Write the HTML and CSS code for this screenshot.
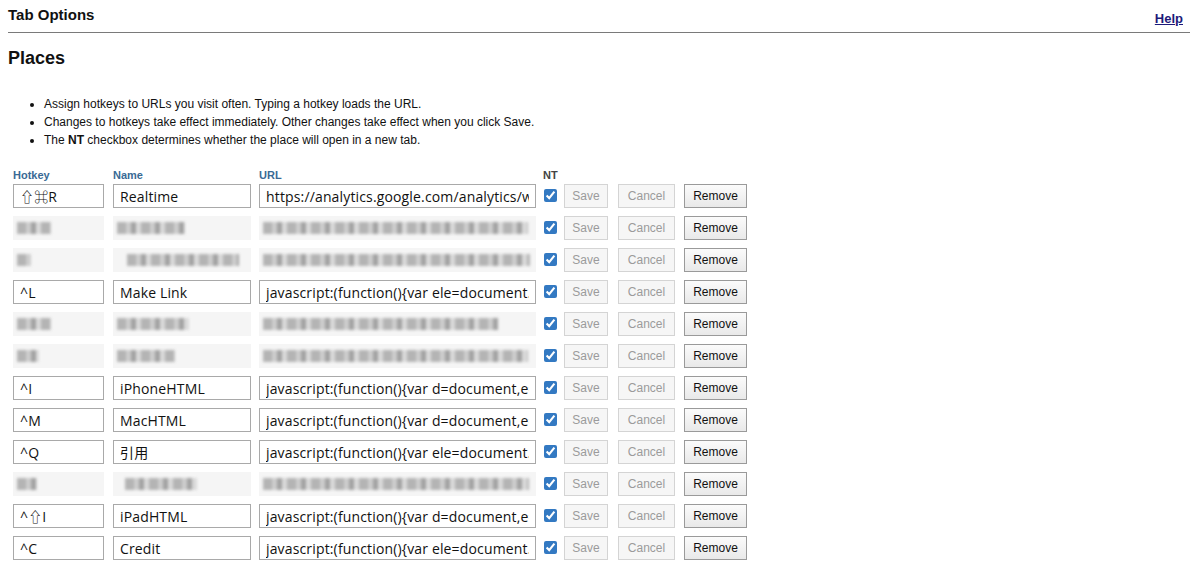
FILE: index.html
```html
<!DOCTYPE html>
<html lang="en">
<head>
  <meta charset="UTF-8" />
  <title>Tab Options</title>
  <link rel="stylesheet" href="styles.css">
</head>
<body>
  <div class="topbar">
    <h1>Tab Options</h1>
    <a href="#" class="help">Help</a>
  </div>

  <h2>Places</h2>

  <ul class="notes">
    <li>Assign hotkeys to URLs you visit often. Typing a hotkey loads the URL.</li>
    <li>Changes to hotkeys take effect immediately. Other changes take effect when you click Save.</li>
    <li>The <b>NT</b> checkbox determines whether the place will open in a new tab.</li>
  </ul>

  <div class="places">
    <div class="row head">
      <span class="c-key">Hotkey</span>
      <span class="c-name">Name</span>
      <span class="c-url">URL</span>
      <span class="c-nt">NT</span>
    </div>

    <div class="row">
      <input class="c-key" value="⇧⌘R" />
      <input class="c-name" value="Realtime" />
      <input class="c-url" value="https://analytics.google.com/analytics/web/#realtime" />
      <input type="checkbox" class="c-nt" checked />
      <button class="btn off">Save</button><button class="btn off cancel">Cancel</button><button class="btn remove">Remove</button>
    </div>

    <!-- hidden rows are shown pixelated -->
    <div class="row">
      <div class="c-key fuzz"><i style="width:34px"></i></div>
      <div class="c-name fuzz"><i style="width:68px"></i></div>
      <div class="c-url fuzz"><i style="width:265px"></i></div>
      <input type="checkbox" class="c-nt" checked />
      <button class="btn off">Save</button><button class="btn off cancel">Cancel</button><button class="btn remove">Remove</button>
    </div>

    <div class="row">
      <div class="c-key fuzz"><i style="width:14px"></i></div>
      <div class="c-name fuzz"><i style="width:112px;margin-left:10px"></i></div>
      <div class="c-url fuzz"><i style="width:267px"></i></div>
      <input type="checkbox" class="c-nt" checked />
      <button class="btn off">Save</button><button class="btn off cancel">Cancel</button><button class="btn remove">Remove</button>
    </div>

    <div class="row">
      <input class="c-key" value="^L" />
      <input class="c-name" value="Make Link" />
      <input class="c-url" value="javascript:(function(){var ele=document.createElement('a');})()" />
      <input type="checkbox" class="c-nt" checked />
      <button class="btn off">Save</button><button class="btn off cancel">Cancel</button><button class="btn remove">Remove</button>
    </div>

    <div class="row">
      <div class="c-key fuzz"><i style="width:34px"></i></div>
      <div class="c-name fuzz"><i style="width:72px"></i></div>
      <div class="c-url fuzz"><i style="width:235px"></i></div>
      <input type="checkbox" class="c-nt" checked />
      <button class="btn off">Save</button><button class="btn off cancel">Cancel</button><button class="btn remove">Remove</button>
    </div>

    <div class="row">
      <div class="c-key fuzz"><i style="width:22px"></i></div>
      <div class="c-name fuzz"><i style="width:58px"></i></div>
      <div class="c-url fuzz"><i style="width:265px"></i></div>
      <input type="checkbox" class="c-nt" checked />
      <button class="btn off">Save</button><button class="btn off cancel">Cancel</button><button class="btn remove">Remove</button>
    </div>

    <div class="row">
      <input class="c-key" value="^I" />
      <input class="c-name" value="iPhoneHTML" />
      <input class="c-url" value="javascript:(function(){var d=document,e=d.createElement('textarea');})()" />
      <input type="checkbox" class="c-nt" checked />
      <button class="btn off">Save</button><button class="btn off cancel">Cancel</button><button class="btn remove">Remove</button>
    </div>

    <div class="row">
      <input class="c-key" value="^M" />
      <input class="c-name" value="MacHTML" />
      <input class="c-url" value="javascript:(function(){var d=document,e=d.createElement('textarea');})()" />
      <input type="checkbox" class="c-nt" checked />
      <button class="btn off">Save</button><button class="btn off cancel">Cancel</button><button class="btn remove">Remove</button>
    </div>

    <div class="row">
      <input class="c-key" value="^Q" />
      <input class="c-name" value="引用" />
      <input class="c-url" value="javascript:(function(){var ele=document.getSelection();})()" />
      <input type="checkbox" class="c-nt" checked />
      <button class="btn off">Save</button><button class="btn off cancel">Cancel</button><button class="btn remove">Remove</button>
    </div>

    <div class="row">
      <div class="c-key fuzz"><i style="width:20px"></i></div>
      <div class="c-name fuzz"><i style="width:72px;margin-left:8px"></i></div>
      <div class="c-url fuzz"><i style="width:266px"></i></div>
      <input type="checkbox" class="c-nt" checked />
      <button class="btn off">Save</button><button class="btn off cancel">Cancel</button><button class="btn remove">Remove</button>
    </div>

    <div class="row">
      <input class="c-key" value="^⇧I" />
      <input class="c-name" value="iPadHTML" />
      <input class="c-url" value="javascript:(function(){var d=document,e=d.createElement('textarea');})()" />
      <input type="checkbox" class="c-nt" checked />
      <button class="btn off">Save</button><button class="btn off cancel">Cancel</button><button class="btn remove">Remove</button>
    </div>

    <div class="row">
      <input class="c-key" value="^C" />
      <input class="c-name" value="Credit" />
      <input class="c-url" value="javascript:(function(){var ele=document.title;})()" />
      <input type="checkbox" class="c-nt" checked />
      <button class="btn off">Save</button><button class="btn off cancel">Cancel</button><button class="btn remove">Remove</button>
    </div>
  </div>
</body>
</html>
```

FILE: styles.css
```css
body {
  font-family: "Liberation Sans", Arial, sans-serif;
  margin: 0;
  padding: 0 10px 0 8px;
  color: #111;
  background: #fff;
}

.topbar {
  display: flex;
  justify-content: space-between;
  align-items: flex-end;
  border-bottom: 1px solid #7a7a7a;
  height: 32px;
}

h1 {
  font-size: 15px;
  margin: 0;
  padding-top: 6px;
  align-self: flex-start;
}

.help {
  font-size: 13px;
  font-weight: bold;
  color: #1d1a7a;
  margin-right: 7px;
  margin-bottom: 6px;
}

h2 {
  font-size: 18px;
  margin: 14px 0 0 0;
  line-height: 22px;
}

.notes {
  margin: 26px 0 0 0;
  padding-left: 36px;
  font-size: 12px;
  line-height: 18px;
}

.places {
  margin: 19px 0 0 5px;
  display: flex;
  flex-direction: column;
  gap: 8px;
}

.row {
  display: flex;
  align-items: center;
  height: 24px;
}

.row.head {
  height: 14px;
  margin-bottom: -6px;
  font-size: 11px;
  font-weight: bold;
  color: #3a6a95;
}

.row.head .c-nt {
  color: #444;
}

.c-key {
  width: 91px;
  margin-right: 9px;
}

.c-name {
  width: 138px;
  margin-right: 8px;
}

.c-url {
  width: 277px;
  margin-right: 8px;
}

.c-nt {
  width: 13px;
  margin: 0 7px 0 0;
}

.row.head .c-url {
  margin-right: 7px;
}

.row.head .c-nt {
  width: auto;
}

input {
  box-sizing: border-box;
  height: 24px;
  border: 1px solid #a9a9a9;
  border-radius: 0;
  padding: 0 6px;
  font-family: "Open Sans", "Noto Sans CJK JP", sans-serif;
  font-size: 14px;
  letter-spacing: 0.15px;
  color: #111;
  outline: none;
}

input[type="checkbox"] {
  height: 13px;
  padding: 0;
  accent-color: #3379c2;
  position: relative;
  top: -1px;
}

.fuzz {
  box-sizing: border-box;
  height: 24px;
  background: #f5f5f5;
  padding: 6px 4px;
  display: flex;
}

.fuzz i {
  display: block;
  height: 12px;
  background: repeating-linear-gradient(90deg, #a9a9a9 0 9px, #c7c7c7 9px 14px, #949494 14px 19px, #d6d6d6 19px 24px);
  filter: blur(1.5px);
  opacity: 0.85;
}

.btn {
  box-sizing: border-box;
  height: 24px;
  font-family: "Liberation Sans", Arial, sans-serif;
  font-size: 12px;
  border: 1px solid #9a9a9a;
  border-radius: 0;
  background: linear-gradient(#fbfbfb, #e9e9e9);
  color: #111;
  padding: 0;
  margin-right: 10px;
}

.btn.off {
  width: 44px;
  color: #9b9b9b;
  border-color: #d4d4d4;
  background: #f6f6f6;
}

.btn.cancel {
  width: 57px;
  margin-right: 9px;
}

.btn.remove {
  width: 63px;
}
```
